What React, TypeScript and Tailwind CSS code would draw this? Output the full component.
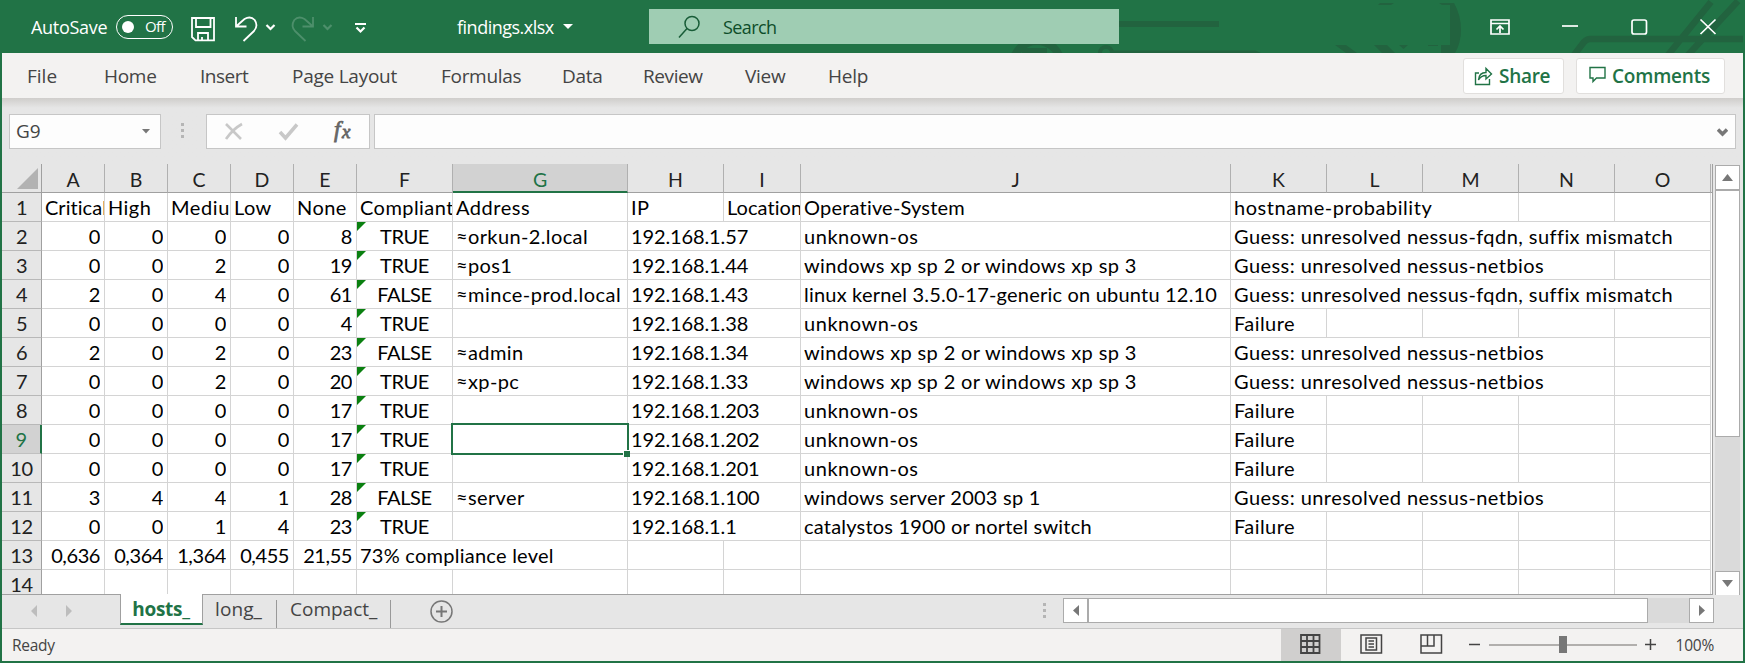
import React from "react";

type Cell = { t: string; w: string; a?: "r" | "c"; flag?: boolean; sel?: boolean };

const GUESS_F = "Guess: unresolved nessus-fqdn, suffix mismatch";
const GUESS_N = "Guess: unresolved nessus-netbios";
const XP = "windows xp sp 2 or windows xp sp 3";

const data: string[][] = [
  ["0", "0", "0", "0", "8", "TRUE", "≈orkun-2.local", "192.168.1.57", "unknown-os", GUESS_F],
  ["0", "0", "2", "0", "19", "TRUE", "≈pos1", "192.168.1.44", XP, GUESS_N],
  ["2", "0", "4", "0", "61", "FALSE", "≈mince-prod.local", "192.168.1.43", "linux kernel 3.5.0-17-generic on ubuntu 12.10", GUESS_F],
  ["0", "0", "0", "0", "4", "TRUE", "", "192.168.1.38", "unknown-os", "Failure"],
  ["2", "0", "2", "0", "23", "FALSE", "≈admin", "192.168.1.34", XP, GUESS_N],
  ["0", "0", "2", "0", "20", "TRUE", "≈xp-pc", "192.168.1.33", XP, GUESS_N],
  ["0", "0", "0", "0", "17", "TRUE", "", "192.168.1.203", "unknown-os", "Failure"],
  ["0", "0", "0", "0", "17", "TRUE", "", "192.168.1.202", "unknown-os", "Failure"],
  ["0", "0", "0", "0", "17", "TRUE", "", "192.168.1.201", "unknown-os", "Failure"],
  ["3", "4", "4", "1", "28", "FALSE", "≈server", "192.168.1.100", "windows server 2003 sp 1", GUESS_N],
  ["0", "0", "1", "4", "23", "TRUE", "", "192.168.1.1", "catalystos 1900 or nortel switch", "Failure"],
];

const W63 = "w-[63px]";
const W96 = "w-[96px]";
const blank = (n: number): Cell[] => Array.from({ length: n }, () => ({ t: "", w: W96 }));

function tracking(t: string): string {
  if (t.startsWith("192.")) return "tracking-[-0.12px]";
  if (/^[\d,]+$/.test(t) || t === "TRUE" || t === "FALSE") return "tracking-[-0.42px]";
  if (t === XP) return "tracking-[0.35px]";
  if (t.startsWith("linux") || t.startsWith("catalystos") || t === "Operative-System") return "tracking-[0.2px]";
  if (t.startsWith("windows server") || t.startsWith("73%")) return "tracking-[0.25px]";
  if (t.startsWith("≈mince")) return "tracking-[0.48px]";
  if (t.startsWith("≈")) return "tracking-[0.38px]";
  if (t === "unknown-os" || t === "hostname-probability" || t === "Address") return "tracking-[0.54px]";
  if (t === "Medium") return "tracking-[0.6px]";
  if (t === "Critical" || t === "Location") return "tracking-[0.05px]";
  return "tracking-[0.44px]";
}

function tail(text: string): Cell[] {
  if (text === GUESS_F) return [{ t: text, w: "w-[480px]" }];
  if (text === GUESS_N) return [{ t: text, w: "w-[384px]" }, ...blank(1)];
  return [{ t: text, w: W96 }, ...blank(4)];
}

const rows: Cell[][] = [
  [
    { t: "Critical", w: W63 },
    { t: "High", w: W63 },
    { t: "Medium", w: W63 },
    { t: "Low", w: W63 },
    { t: "None", w: W63 },
    { t: "Compliant", w: W96 },
    { t: "Address", w: "w-[175px]" },
    { t: "IP", w: W96 },
    { t: "Location", w: "w-[77px]" },
    { t: "Operative-System", w: "w-[430px]" },
    { t: "hostname-probability", w: "w-[288px]" },
    ...blank(2),
  ],
  ...data.map((r, i): Cell[] => [
    ...r.slice(0, 5).map((t): Cell => ({ t, w: W63, a: "r" })),
    { t: r[5], w: W96, a: "c", flag: true },
    { t: r[6], w: "w-[175px]", sel: i === 7 },
    { t: r[7], w: "w-[173px]" },
    { t: r[8], w: "w-[430px]" },
    ...tail(r[9]),
  ]),
  [
    ...["0,636", "0,364", "1,364", "0,455", "21,55"].map((t): Cell => ({ t, w: W63, a: "r" })),
    { t: "73% compliance level", w: "w-[271px]" },
    { t: "", w: W96 },
    { t: "", w: "w-[77px]" },
    { t: "", w: "w-[430px]" },
    ...blank(5),
  ],
  [
    ...Array.from({ length: 5 }, (): Cell => ({ t: "", w: W63 })),
    { t: "", w: W96 },
    { t: "", w: "w-[175px]" },
    { t: "", w: W96 },
    { t: "", w: "w-[77px]" },
    { t: "", w: "w-[430px]" },
    ...blank(5),
  ],
];

const heads: [string, string][] = [
  ["A", W63], ["B", W63], ["C", W63], ["D", W63], ["E", W63],
  ["F", W96], ["G", "w-[175px]"], ["H", W96], ["I", "w-[77px]"], ["J", "w-[430px]"],
  ["K", W96], ["L", W96], ["M", W96], ["N", W96], ["O", W96],
];

const tabs: [string, string][] = [
  ["File", "w-[77px] tracking-[0px]"],
  ["Home", "w-[96px] tracking-[-0.3px]"],
  ["Insert", "w-[92px] tracking-[-0.5px]"],
  ["Page Layout", "w-[149px] tracking-[-0.25px]"],
  ["Formulas", "w-[121px] tracking-[-0.3px]"],
  ["Data", "w-[81px] tracking-[-0.3px]"],
  ["Review", "w-[102px] tracking-[-0.4px]"],
  ["View", "w-[83px] tracking-[-0.3px]"],
  ["Help", "w-[60px] tracking-[-0.2px]"],
];

function TitleBar() {
  return (
    <header className="relative flex h-[53px] shrink-0 items-center bg-[#217346] text-white">
      <svg className="absolute inset-0" width="1745" height="53" fill="none" stroke="#22633f">
        <path d="M1119 24H1219" strokeWidth="6" />
        <circle cx="1037" cy="65" r="24" strokeWidth="8" />
        <path d="M1022 51H1047" strokeWidth="6" />
        <circle cx="1106" cy="53" r="6" strokeWidth="4" />
        <path d="M1111 52H1255L1262 55" strokeWidth="3" />
        <path d="M1335 45H1346L1357 53H1346ZM1374 45H1387L1395 53H1382ZM1399 45H1408L1403.500 49ZM1428 45H1438V46H1428ZM1380 3H1394L1391 5H1378ZM1439 3H1454Q1461 15 1461 30Q1461 43 1455 53H1441V45H1450V5H1442Z" fill="#22633f" stroke="none" />
        <path d="M1574 55L1584 42Q1587 39 1590 39H1743M1668 55L1711 2M1688 55L1738 1" strokeWidth="6.500" />
      </svg>
      <span className="relative ml-[31px] w-[85px] pt-[1px] text-[18px] tracking-[-0.3px]">AutoSave</span>
      <div className="relative flex h-[24px] w-[57px] items-center rounded-full border-[1.5px] border-white">
        <i className="ml-[5px] h-[12px] w-[12px] rounded-full bg-white" />
        <span className="ml-[11px] text-[15px] tracking-[-0.6px]">Off</span>
      </div>
      <svg className="absolute left-0 top-0" width="380" height="53" fill="none" stroke="white" strokeWidth="1.800">
        <path d="M192 18H214V40.300H195.500L192 37ZM196 18V27H210.500V18M198 40V33H208V40M202 37V40" />
        <path d="M236 17V26.500H246.500M236 26.500L244.500 19Q250.500 15.500 254.700 20Q258.500 26 254 31L243.500 41" />
        <path d="M266.500 25L270.500 29L274.500 25" strokeWidth="2.200" />
        <g stroke="#4d8f6b">
          <path d="M313 17V26.500H302.500M313 26.500L304.500 19Q298.500 15.500 294.300 20Q290.500 26 295 31L305.500 41" />
          <path d="M323.500 25L327.500 29L331.500 25" strokeWidth="2.200" />
        </g>
        <path d="M355 24H366M356.500 27.500L360.500 31.500L364.500 27.500" strokeWidth="2.200" />
      </svg>
      <span className="relative ml-[284px] w-[106px] pt-[1px] text-[18px] tracking-[-0.5px]">findings.xlsx</span>
      <svg className="relative" width="11" height="7"><path d="M0 1H10L5 6Z" fill="white" /></svg>
      <div className="relative ml-[75px] flex h-[35px] w-[470px] items-center bg-[#9fcdb3] text-[#185c37]">
        <svg className="ml-[29px]" width="23" height="24" fill="none" stroke="#185c37" strokeWidth="1.500">
          <circle cx="14" cy="8.500" r="7" />
          <path d="M9 13.500L1 22.500" />
        </svg>
        <span className="ml-[22px] pt-[2px] text-[18px] tracking-[-0.600px] text-[#0e4d2a]">Search</span>
      </div>
      <svg className="absolute left-[1480px] top-0" width="260" height="53" fill="none" stroke="white" strokeWidth="1.700">
        <path d="M11 20H29V34H11ZM11 23.500H29M20 33V26M16.500 29.500L20 26L23.500 29.500" />
        <path d="M82 26H98" />
        <rect x="152" y="20" width="14.500" height="14" rx="2" />
        <path d="M220.500 19.500L235.500 34M235.500 19.500L220.500 34" />
      </svg>
    </header>
  );
}

function Ribbon() {
  return (
    <nav className="flex h-[45px] shrink-0 items-center bg-[#f3f2f1] pl-[25px] text-[19px] text-[#444]">
      {tabs.map(([t, c]) => (
        <span key={t} className={`shrink-0 whitespace-nowrap pt-[2px] ${c}`}>{t}</span>
      ))}
      <button className="ml-auto flex h-[36px] w-[101px] items-center rounded-[3px] border border-[#e1dfdd] bg-white pl-[10px] font-semibold text-[#217346]">
        <svg width="19" height="20" fill="none" stroke="#217346" strokeWidth="1.400">
          <path d="M5 7H1.500V18.500H15.500V13M4.500 14Q5 6.500 12 6.500V2.500L17.500 8L12 13V9.500Q7 9.500 4.500 14Z" />
        </svg>
        <span className="ml-[6px] pt-[2px] tracking-[-0.3px]">Share</span>
      </button>
      <button className="ml-[12px] mr-[18px] flex h-[36px] w-[149px] items-center rounded-[3px] border border-[#e1dfdd] bg-white pl-[12px] font-semibold text-[#217346]">
        <svg className="-mt-[1px]" width="18" height="20" fill="none" stroke="#217346" strokeWidth="1.400">
          <path d="M1 2.500H16V13H7.500L4 16.500V13H1Z" />
        </svg>
        <span className="ml-[5px] pt-[2px] tracking-[-0.2px]">Comments</span>
      </button>
    </nav>
  );
}

function FormulaBar() {
  return (
    <div className="flex h-[66px] shrink-0 bg-gradient-to-b from-[#cfcdcb] via-[#e6e6e6] via-[15%] to-[#e6e6e6] pl-[7px] pt-[16px]">
      <div className="flex h-[35px] w-[152px] items-center border border-[#c6c6c6] bg-[#fdfdfd] pl-[6px] text-[19px] tracking-[-0.1px] text-[#444]">
        G9
        <svg className="ml-auto mr-[10px]" width="8" height="5"><path d="M0 0H8L4 4.500Z" fill="#777" /></svg>
      </div>
      <svg className="ml-[20px] mt-[9px]" width="4" height="18" fill="#b5b5b5"><path d="M0 0H3V3H0ZM0 6H3V9H0ZM0 12H3V15H0Z" /></svg>
      <div className="ml-[21px] flex h-[35px] w-[164px] items-center border border-[#c6c6c6] bg-[#fdfdfd]">
        <svg width="162" height="33" fill="none" stroke="#c8c8c8">
          <path d="M19 9L34 24M35 9Q26 14 19 24" strokeWidth="2.600" />
          <path d="M73 17L78.500 23L90 9.500" strokeWidth="3.500" />
          <text x="127" y="22" className="fill-[#666] font-['Liberation_Serif'] text-[23px] italic" stroke="#666" strokeWidth="0.800">f</text>
          <text x="135" y="23" className="fill-[#666] font-['Liberation_Serif'] text-[19px] italic" stroke="#666" strokeWidth="0.800">x</text>
        </svg>
      </div>
      <div className="ml-[4px] flex h-[35px] w-[1362px] items-center border border-[#c6c6c6] bg-[#fdfdfd]">
        <svg className="ml-auto mr-[7px] mt-[2px]" width="11" height="9" fill="none" stroke="#777" strokeWidth="3.500"><path d="M1 1.500L5.500 6L10 1.500" /></svg>
      </div>
    </div>
  );
}

function Grid() {
  return (
    <div className="flex h-[431px] w-[1711px] shrink-0 flex-col overflow-hidden border-b border-r border-[#a0a0a0] bg-white font-['Lato','Noto_Sans',sans-serif] text-black">
      <div className="flex h-[29px] w-[1711px] shrink-0 bg-[#e6e6e6] text-[19.500px]">
        <div className="flex w-[40px] shrink-0 items-end justify-end border-b border-r border-[#a0a0a0] pb-[3px] pr-[3px]">
          <svg width="21" height="21"><path d="M21 0V21H0Z" fill="#b2b2b2" /></svg>
        </div>
        {heads.map(([h, w]) => (
          <div
            key={h}
            className={`flex shrink-0 items-center justify-center border-r ${w} ${
              h === "G" ? "border-b-2 border-b-[#217346] border-r-[#b0b0b0] bg-[#d2d2d2] pt-[4px] text-[#217346]" : "border-b border-b-[#a0a0a0] border-r-[#b0b0b0] pt-[3px] text-[#222]"
            }`}
          >
            {h}
          </div>
        ))}
        <div className="w-[2px] shrink-0 border-b border-[#a0a0a0]" />
      </div>
      {rows.map((row, i) => (
        <div key={i} className="flex h-[29px] w-[1711px] shrink-0 text-[20px] leading-[28px]">
          <div
            className={`w-[40px] shrink-0 border-b text-center tracking-[-0.42px] ${
              i === 8 ? "border-r-2 border-b-[#c0c0c0] border-r-[#217346] bg-[#d2d2d2] text-[#217346]" : "border-r border-b-[#b8b8b8] border-r-[#a0a0a0] bg-[#e6e6e6] text-[#222]"
            }`}
          >
            {i + 1}
          </div>
          {row.map((c, j) => (
            <div
              key={j}
              className={`relative shrink-0 border-b border-r border-[#d4d4d4] ${c.w} ${
                c.a === "r" ? "pr-[4px] text-right" : c.a === "c" ? "text-center" : "pl-[3px]"
              }`}
            >
              {c.flag && (
                <svg className="absolute left-0 top-0" width="9" height="9"><path d="M0 0H9L0 9Z" fill="#0a8010" /></svg>
              )}
              <span className={`block overflow-hidden whitespace-nowrap ${tracking(c.t)}`}>{c.t}</span>
              {c.sel && (
                <>
                  <div className="absolute -left-[2px] -top-[2px] z-10 h-[32px] w-[178px] border-2 border-[#217346]" />
                  <div className="absolute -bottom-[4px] -right-[3px] z-20 h-[7px] w-[7px] border-l border-t border-white bg-[#217346]" />
                </>
              )}
            </div>
          ))}
        </div>
      ))}
    </div>
  );
}

function VScroll() {
  return (
    <div className="ml-[2px] mt-[1px] flex h-[431px] w-[25px] shrink-0 flex-col bg-[#dadada]">
      <div className="flex h-[25px] items-center justify-center border border-[#ababab] bg-white">
        <svg width="11" height="7"><path d="M5.500 0L11 7H0Z" fill="#777" /></svg>
      </div>
      <div className="h-[247px] border border-[#ababab] bg-white" />
      <div className="mt-auto flex h-[25px] items-center justify-center border border-[#ababab] bg-white">
        <svg width="11" height="7"><path d="M0 0H11L5.500 7Z" fill="#777" /></svg>
      </div>
    </div>
  );
}

function SheetTabs() {
  return (
    <div className="flex h-[34px] shrink-0 border-b border-[#c6c6c6] bg-[#e6e6e6] text-[19px] leading-[27px] text-[#444]">
      <svg className="ml-[29px] mt-[10px]" width="42" height="12" fill="#bdbdbd"><path d="M6 0V12L0 6ZM35 0V12L41 6Z" /></svg>
      <div className="relative ml-[47px] -mt-px h-[31px] w-[83px] border-x border-b-2 border-x-[#a0a0a0] border-b-[#217346] bg-white pr-[1px] pt-[2px] text-center font-bold tracking-[-0.300px] text-[#217346]">hosts_</div>
      <div className="w-[73px] pl-[12px] pt-[1px] tracking-[0.1px]">long_</div>
      <div className="mt-[5px] h-[28px] border-l border-[#999]" />
      <div className="w-[113px] pl-[13px] pt-[1px] tracking-[0px]">Compact_</div>
      <div className="mt-[5px] h-[28px] border-l border-[#999]" />
      <svg className="ml-[39px] mt-[5px]" width="23" height="23" fill="none" stroke="#777" strokeWidth="1.500">
        <circle cx="11.500" cy="11.500" r="10.500" />
        <path d="M6 11.500H17M11.500 6V17" strokeWidth="2" />
      </svg>
      <svg className="ml-auto mt-[8px]" width="4" height="18" fill="#b5b5b5"><path d="M0 0H3V3H0ZM0 6H3V9H0ZM0 12H3V15H0Z" /></svg>
      <div className="ml-[16px] mr-[29px] mt-[3px] flex h-[25px] w-[651px] bg-[#dadada]">
        <div className="flex w-[25px] items-center justify-center border border-[#ababab] bg-white">
          <svg width="6" height="11"><path d="M6 0V11L0 5.500Z" fill="#777" /></svg>
        </div>
        <div className="w-[560px] border border-[#ababab] bg-white" />
        <div className="ml-auto flex w-[25px] items-center justify-center border border-[#ababab] bg-white">
          <svg width="6" height="11"><path d="M0 0V11L6 5.500Z" fill="#777" /></svg>
        </div>
      </div>
    </div>
  );
}

function StatusBar() {
  return (
    <footer className="flex h-[32px] shrink-0 items-center bg-[#f3f2f1] text-[15.500px] text-[#444]">
      <span className="ml-[10px] pt-[2px] tracking-[-0.300px]">Ready</span>
      <svg className="ml-auto mr-[2px]" width="460" height="32" fill="none" stroke="#444" strokeWidth="1.500">
        <path d="M0 0H60V32H0Z" fill="#d0cfce" stroke="none" />
        <path d="M20 6H38.500V24H20ZM26 6V24M32.500 6V24M20 12H38.500M20 18H38.500" strokeWidth="1.800" />
        <path d="M80 6H100.500V24H80ZM85 9H95.500V21H85ZM87.500 12H93M87.500 15H93M87.500 18H93" />
        <path d="M140 6H160.500V24H140ZM140 17H153V6M146.500 6V17" />
        <path d="M188 15.500H199M364 15.500H375M369.500 10V21" />
        <path d="M208 16H356" stroke="#b1afad" strokeWidth="2" />
        <path d="M278 7H286V24H278Z" fill="#777" stroke="none" />
        <text x="394.500" y="22" className="fill-[#444] text-[15.500px] tracking-[-0.200px]" stroke="none">100%</text>
      </svg>
    </footer>
  );
}

export default function App() {
  return (
    <div className="flex h-[663px] w-[1745px] flex-col overflow-hidden bg-[#217346] font-['Open_Sans',sans-serif]">
      <TitleBar />
      <div className="flex h-[608px] w-[1741px] shrink-0 flex-col self-center">
        <Ribbon />
        <FormulaBar />
        <div className="flex h-[431px] shrink-0 bg-[#e6e6e6]">
          <Grid />
          <VScroll />
        </div>
        <SheetTabs />
        <StatusBar />
      </div>
    </div>
  );
}
